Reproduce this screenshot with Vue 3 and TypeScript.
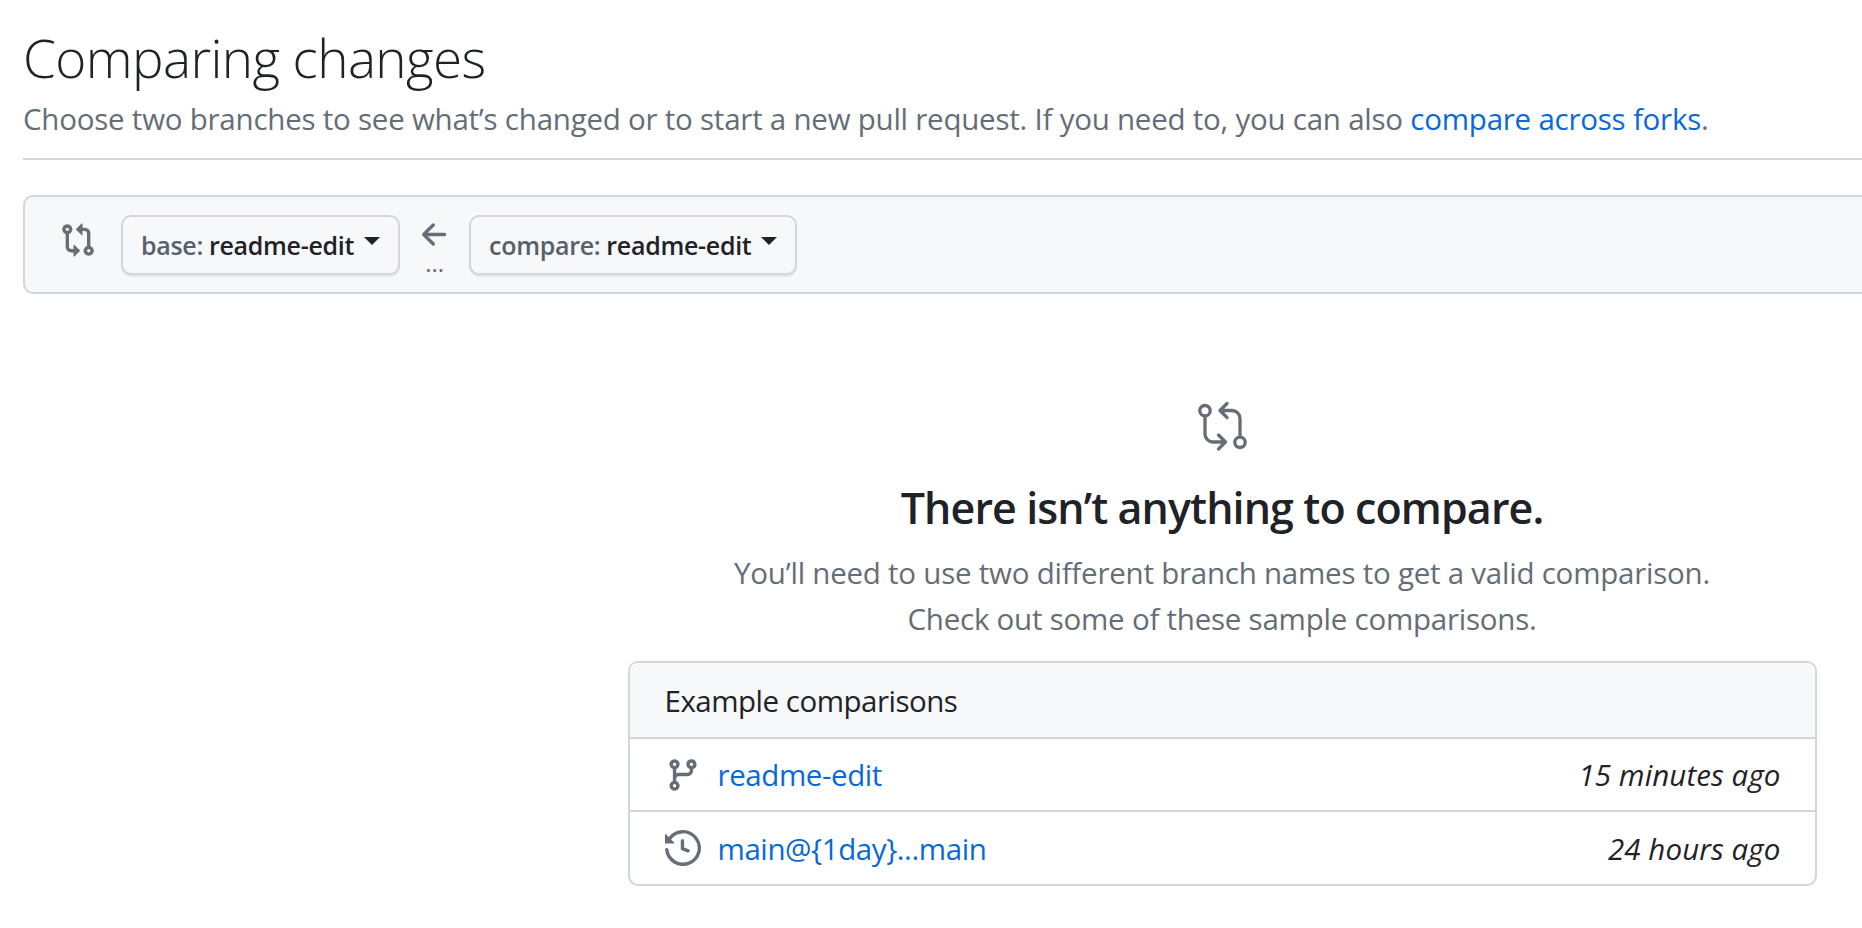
<script setup lang="ts">
const compare = "M9.573.677A.25.25 0 0 1 10 .854V2.5h1A2.5 2.5 0 0 1 13.5 5v5.628a2.251 2.251 0 1 1-1.5 0V5a1 1 0 0 0-1-1h-1v1.646a.25.25 0 0 1-.427.177L7.177 3.427a.25.25 0 0 1 0-.354ZM6 12v-1.646a.25.25 0 0 1 .427-.177l2.396 2.396a.25.25 0 0 1 0 .354l-2.396 2.396A.25.25 0 0 1 6 15.146V13.5H5A2.5 2.5 0 0 1 2.5 11V5.372a2.25 2.25 0 1 1 1.5 0V11a1 1 0 0 0 1 1ZM4 3.25a.75.75 0 1 0-1.5 0 .75.75 0 0 0 1.5 0ZM12.75 12a.75.75 0 1 0 0 1.5.75.75 0 0 0 0-1.5Z";
const branch = "M9.5 3.25a2.25 2.25 0 1 1 3 2.122V6A2.5 2.5 0 0 1 10 8.5H6a1 1 0 0 0-1 1v1.128a2.251 2.251 0 1 1-1.5 0V5.372a2.25 2.25 0 1 1 1.5 0v1.836A2.493 2.493 0 0 1 6 7h4a1 1 0 0 0 1-1v-.628A2.25 2.25 0 0 1 9.5 3.25Zm-6 0a.75.75 0 1 0 1.5 0 .75.75 0 0 0-1.5 0Zm8.25-.75a.75.75 0 1 0 0 1.5.75.75 0 0 0 0-1.5ZM4.25 12a.75.75 0 1 0 0 1.5.75.75 0 0 0 0-1.5Z";
const history = "m.427 1.927 1.215 1.215a8.002 8.002 0 1 1-1.6 5.685.75.75 0 1 1 1.493-.154 6.5 6.5 0 1 0 1.18-4.458l1.358 1.358A.25.25 0 0 1 3.896 6H.25A.25.25 0 0 1 0 5.75V2.104a.25.25 0 0 1 .427-.177ZM7.75 4a.75.75 0 0 1 .75.75v2.992l2.028.812a.75.75 0 0 1-.557 1.392l-2.5-1A.751.751 0 0 1 7 8.25v-3.5A.75.75 0 0 1 7.75 4Z";
const arrow = "M7.78 12.53a.75.75 0 0 1-1.06 0L2.47 8.28a.75.75 0 0 1 0-1.06l4.25-4.25a.751.751 0 0 1 1.042.018.751.751 0 0 1 .018 1.042L4.81 7h7.44a.75.75 0 0 1 0 1.5H4.81l2.97 2.97a.75.75 0 0 1 0 1.06Z";
const rows = [
  { icon: branch, name: "readme-edit", time: "15 minutes ago" },
  { icon: history, name: "main@{1day}...main", time: "24 hours ago" },
];
</script>

<template>
  <div class="page">
    <div class="inner">
      <header class="head">
        <h1>Comparing changes</h1>
        <p>Choose two branches to see what’s changed or to start a new pull request. If you need to, you can also <a href="#">compare across forks</a>.</p>
      </header>

      <section class="bar">
        <svg class="bar-icon" viewBox="0 0 16 16" width="36" height="36"><path :d="compare" /></svg>
        <button class="ref">base: <b>readme-edit</b><i class="caret"></i></button>
        <div class="sep">
          <svg viewBox="0 0 16 16" width="36" height="36"><path :d="arrow" /></svg>
          <span>...</span>
        </div>
        <button class="ref">compare: <b>readme-edit</b><i class="caret"></i></button>
      </section>

      <section class="blank">
        <svg class="blank-icon" viewBox="15 10 54 54" width="54" height="54">
          <circle cx="25" cy="20.7" r="5.2" />
          <circle cx="60" cy="52.3" r="5.2" />
          <path d="M25 26v18a8 8 0 0 0 8 8h12.5M38.5 45l7 7-7 7" />
          <path d="M60 47V28.500a8 8 0 0 0-8-8H40M47 13.500l-7 7 7 7" />
        </svg>
        <h3>There isn’t anything to compare.</h3>
        <p>You’ll need to use two different branch names to get a valid comparison.<br />Check out some of these sample comparisons.</p>
        <div class="card">
          <div class="card-head">Example comparisons</div>
          <div v-for="r in rows" :key="r.name" class="row">
            <svg viewBox="0 0 16 16" width="36" height="36"><path :d="r.icon" /></svg>
            <a href="#">{{ r.name }}</a>
            <em>{{ r.time }}</em>
          </div>
        </div>
      </section>
    </div>
  </div>
</template>

<style>
html, body { margin: 0; overflow: hidden; background: #fff; }
</style>

<style scoped>
.page {
  width: 1862px;
  height: 928px;
  overflow: hidden;
  padding-left: 23px;
  box-sizing: border-box;
  font-family: "Open Sans", "Liberation Sans", sans-serif;
  color: #1f2328;
}
.inner { width: 2398px; }
svg { display: block; flex: none; fill: #656d76; }
a { color: #0969da; text-decoration: none; }
.head {
  height: 160px;
  box-sizing: border-box;
  border-bottom: 2px solid #d0d7de;
  padding-top: 22px;
}
h1 {
  margin: 0;
  font-size: 53px;
  line-height: 72px;
  font-weight: 300;
  letter-spacing: -0.6px;
}
.head p {
  margin: 5px 0 0;
  font-size: 29.5px;
  line-height: 40px;
  color: #656d76;
  letter-spacing: -0.23px;
}
.bar {
  margin-top: 35px;
  height: 99px;
  box-sizing: border-box;
  background: #f6f8fa;
  border: 2px solid #d0d7de;
  border-radius: 10px;
  display: flex;
  align-items: flex-start;
  padding: 18px 0 0 35px;
}
.bar-icon { margin: 7px 25px 0 0; }
.ref {
  height: 60px;
  padding: 0 18px;
  box-sizing: border-box;
  background: #f6f8fa;
  border: 2px solid #d0d7de;
  border-radius: 10px;
  box-shadow: 0 2px 0 rgba(31, 35, 40, 0.08);
  font: 600 25px/30px "Open Sans", "Liberation Sans", sans-serif;
  color: #57606a;
  letter-spacing: -0.3px;
  display: flex;
  align-items: center;
  gap: 6px;
}
.ref b { font-weight: 600; color: #1f2328; }
.caret {
  width: 0;
  height: 0;
  margin: -8px 0 0 4px;
  border-style: solid;
  border-width: 8px 8px 0;
  border-color: #1f2328 transparent transparent;
}
.sep {
  width: 69px;
  display: flex;
  flex-direction: column;
  align-items: center;
  color: #656d76;
  margin-top: 2px;
}
.sep span { font-size: 24px; line-height: 20px; }
.blank {
  padding-top: 106px;
  display: flex;
  flex-direction: column;
  align-items: center;
}
.blank-icon {
  margin-bottom: 24px;
  fill: none;
  stroke: #656d76;
  stroke-width: 3.3;
  stroke-linecap: round;
  stroke-linejoin: round;
}
h3 {
  margin: 0;
  font-size: 43px;
  line-height: 60px;
  font-weight: 600;
  letter-spacing: -0.9px;
}
.blank > p {
  margin: 12px 0 0;
  font-size: 29.5px;
  line-height: 46px;
  text-align: center;
  color: #656d76;
  letter-spacing: -0.23px;
}
.card {
  width: 1189px;
  margin-top: 19px;
  box-sizing: border-box;
  border: 2px solid #d0d7de;
  border-radius: 10px;
  overflow: hidden;
  font-size: 29.5px;
  letter-spacing: -0.42px;
}
.card-head {
  height: 76px;
  box-sizing: border-box;
  padding: 0 35px;
  background: #f6f8fa;
  border-bottom: 2px solid #d0d7de;
  display: flex;
  align-items: center;
  letter-spacing: -0.5px;
}
.row {
  height: 71px;
  box-sizing: border-box;
  padding: 0 34px 0 35px;
  display: flex;
  align-items: center;
  gap: 17px;
}
.row + .row { height: 74px; border-top: 2px solid #d0d7de; }
.row em { margin-left: auto; letter-spacing: 0.1px; }
</style>
